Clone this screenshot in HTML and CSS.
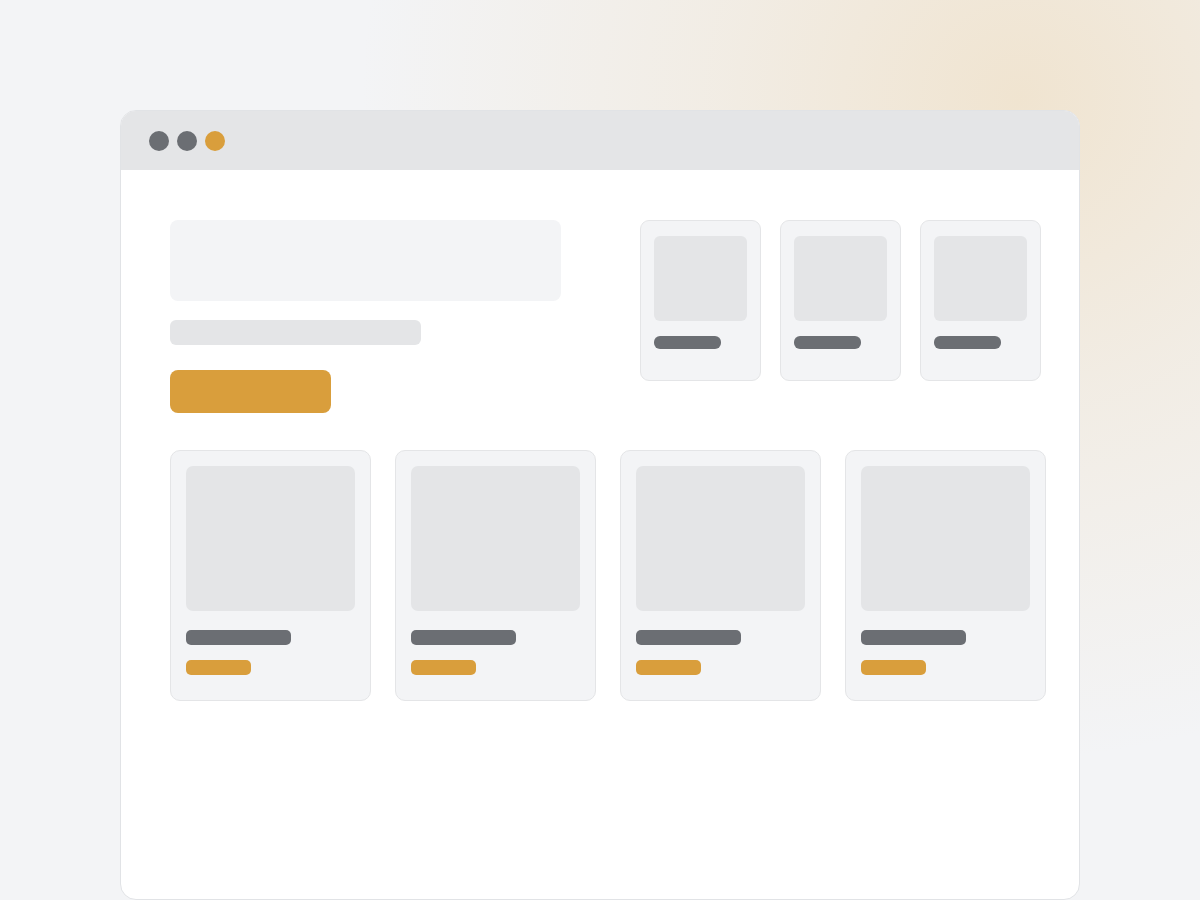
FILE: index.html
```html
<!DOCTYPE html>
<html lang="en">
<head>
<meta charset="utf-8">
<title>Mockup</title>
<link rel="stylesheet" href="styles.css">
</head>
<body>
<div class="page">
  <div class="window">
    <div class="titlebar">
      <span class="dot gray"></span>
      <span class="dot gray"></span>
      <span class="dot accent"></span>
    </div>
    <div class="content">
      <div class="top-row">
        <div class="hero">
          <div class="hero-block"></div>
          <div class="hero-bar"></div>
          <div class="hero-button"></div>
        </div>
        <div class="mini-cards">
          <div class="mini-card"><div class="mini-img"></div><div class="mini-bar"></div></div>
          <div class="mini-card"><div class="mini-img"></div><div class="mini-bar"></div></div>
          <div class="mini-card"><div class="mini-img"></div><div class="mini-bar"></div></div>
        </div>
      </div>
      <div class="card-row">
        <div class="card"><div class="card-img"></div><div class="card-title"></div><div class="card-tag"></div></div>
        <div class="card"><div class="card-img"></div><div class="card-title"></div><div class="card-tag"></div></div>
        <div class="card"><div class="card-img"></div><div class="card-title"></div><div class="card-tag"></div></div>
        <div class="card"><div class="card-img"></div><div class="card-title"></div><div class="card-tag"></div></div>
      </div>
    </div>
  </div>
</div>
</body>
</html>
```
FILE: styles.css
```css
* { box-sizing: border-box; }
html, body {
  margin: 0;
  padding: 0;
  height: 100%;
}
body {
  font-family: "Inter", "Liberation Sans", sans-serif;
  background-color: #f3f4f6;
  background-image: radial-gradient(circle 660px at 1020px 100px, rgba(236, 206, 156, 0.42) 0%, rgba(236, 206, 156, 0.2) 45%, rgba(236, 206, 156, 0) 100%);
  overflow: hidden;
}
.page {
  width: 1200px;
  height: 900px;
  padding: 110px 0 0 120px;
}
.window {
  width: 960px;
  height: 790px;
  background: #ffffff;
  border: 1px solid #e1e3e6;
  border-radius: 16px;
  overflow: hidden;
}
.titlebar {
  height: 59px;
  background: #e4e5e7;
  display: flex;
  align-items: center;
  gap: 8px;
  padding-left: 28px;
}
.dot {
  width: 20px;
  height: 20px;
  border-radius: 50%;
}
.dot.gray { background: #6b6e73; }
.dot.accent { background: #d99e3c; }
.content {
  padding: 50px 38px 0 49px;
}
.top-row {
  display: flex;
  justify-content: space-between;
}
.hero {
  width: 391px;
  display: flex;
  flex-direction: column;
}
.hero-block {
  height: 81px;
  background: #f3f4f6;
  border-radius: 8px;
}
.hero-bar {
  width: 251px;
  height: 25px;
  margin-top: 19px;
  background: #e4e5e7;
  border-radius: 6px;
}
.hero-button {
  width: 161px;
  height: 43px;
  margin-top: 25px;
  background: #d99e3c;
  border-radius: 8px;
}
.mini-cards {
  display: flex;
  gap: 19px;
}
.mini-card {
  width: 121px;
  height: 161px;
  background: #f3f4f6;
  border: 1px solid #e4e5e7;
  border-radius: 9px;
  padding: 15px 13px;
}
.mini-img {
  height: 85px;
  background: #e4e5e7;
  border-radius: 6px;
}
.mini-bar {
  width: 67px;
  height: 13px;
  margin-top: 15px;
  background: #6b6e73;
  border-radius: 6px;
}
.card-row {
  display: flex;
  gap: 24px;
  margin-top: 37px;
}
.card {
  flex: 0 0 201px;
  height: 251px;
  background: #f3f4f6;
  border: 1px solid #e4e5e7;
  border-radius: 10px;
  padding: 15px;
}
.card-img {
  height: 145px;
  background: #e4e5e7;
  border-radius: 7px;
}
.card-title {
  width: 105px;
  height: 15px;
  margin-top: 19px;
  background: #6b6e73;
  border-radius: 5px;
}
.card-tag {
  width: 65px;
  height: 15px;
  margin-top: 15px;
  background: #d99e3c;
  border-radius: 5px;
}
```
